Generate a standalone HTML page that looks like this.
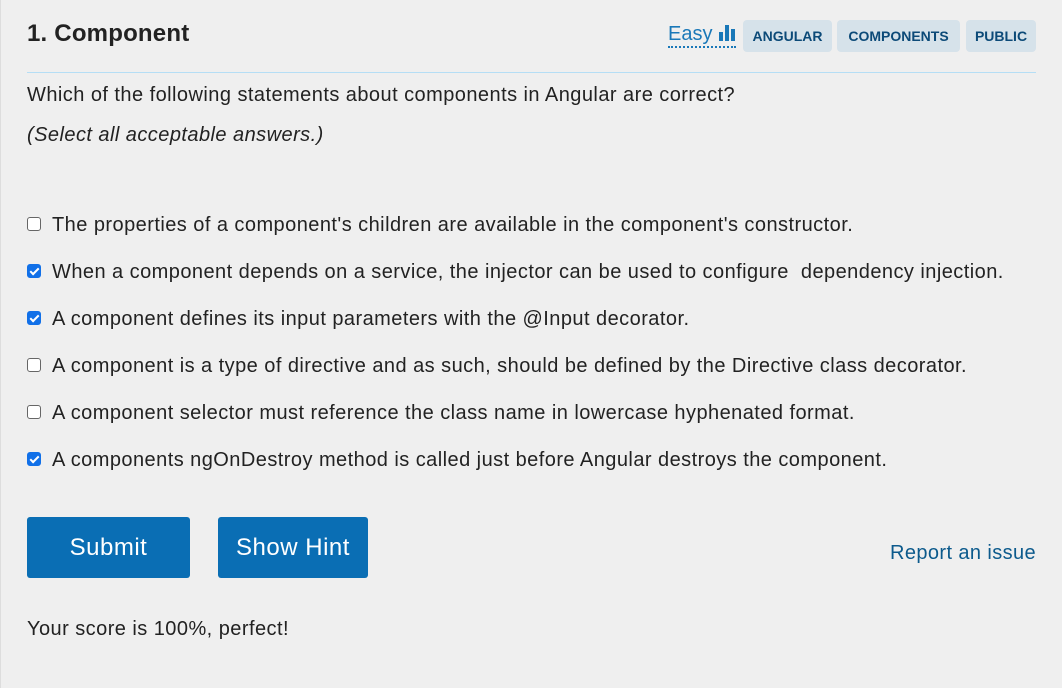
<!DOCTYPE html>
<html><head><meta charset="utf-8"><style>
html,body{margin:0;padding:0;}
body{width:1062px;height:688px;background:#efefef;font-family:"Liberation Sans",sans-serif;color:#222;position:relative;overflow:hidden;border-left:1px solid #ddd;box-sizing:border-box;}
.abs{position:absolute;white-space:nowrap;}
.t{font-size:20px;letter-spacing:0.45px;}
h1{position:absolute;left:26px;top:20px;margin:0;font-size:24px;font-weight:bold;color:#222;letter-spacing:0.2px;}
.tag{position:absolute;top:20px;height:32px;background:#d6e2ea;border-radius:4px;color:#0c4a78;font-weight:bold;font-size:14px;line-height:32px;text-align:center;}
.hr{position:absolute;left:26px;top:72px;width:1009px;height:1px;background:#b5def5;}
.opt{position:absolute;left:26px;white-space:nowrap;}
.cb{display:inline-block;width:12px;height:12px;border:1px solid #666;border-radius:3px;background:#fff;vertical-align:middle;margin-right:11px;position:relative;top:-2px;}
.cb.on{background:#1170e8;border-color:#1170e8;}
.cb.on::after{content:"";position:absolute;left:4px;top:1px;width:3px;height:7px;border:solid #fff;border-width:0 2px 2px 0;transform:rotate(45deg);}
.btn{position:absolute;top:517px;height:61px;background:#0a6eb4;color:#fff;font-size:24px;letter-spacing:0.5px;line-height:61px;text-align:center;border-radius:3px;}
</style></head><body>
<h1>1. Component</h1>
<div class="abs" style="left:667px;top:22px;font-size:20px;color:#1a78b8;border-bottom:2px dotted #1a78b8;line-height:24px;">Easy <svg width="18" height="18" viewBox="0 0 18 18" style="vertical-align:-1px"><rect x="1" y="9" width="4" height="9" fill="#1a78b8"/><rect x="7" y="2" width="4" height="16" fill="#1a78b8"/><rect x="13" y="6" width="4" height="12" fill="#1a78b8"/></svg></div>
<div class="tag" style="left:742px;width:89px;">ANGULAR</div>
<div class="tag" style="left:836px;width:123px;">COMPONENTS</div>
<div class="tag" style="left:965px;width:70px;">PUBLIC</div>
<div class="hr"></div>
<div class="abs t" style="left:26px;top:84px;">Which of the following statements about components in Angular are correct?</div>
<div class="abs t" style="left:26px;top:124px;font-style:italic;">(Select all acceptable answers.)</div>
<div class="opt t" style="top:214px"><span class="cb"></span>The properties of a component's children are available in the component's constructor.</div>
<div class="opt t" style="top:261px"><span class="cb on"></span>When a component depends on a service, the injector can be used to configure &nbsp;dependency injection.</div>
<div class="opt t" style="top:308px"><span class="cb on"></span>A component defines its input parameters with the @Input decorator.</div>
<div class="opt t" style="top:355px"><span class="cb"></span>A component is a type of directive and as such, should be defined by the Directive class decorator.</div>
<div class="opt t" style="top:402px"><span class="cb"></span>A component selector must reference the class name in lowercase hyphenated format.</div>
<div class="opt t" style="top:449px"><span class="cb on"></span>A components ngOnDestroy method is called just before Angular destroys the component.</div>
<div class="btn" style="left:26px;width:163px;">Submit</div>
<div class="btn" style="left:217px;width:150px;">Show Hint</div>
<div class="abs" style="left:889px;top:542px;font-size:20px;letter-spacing:0.4px;color:#0c5a8c;">Report an issue</div>
<div class="abs t" style="left:26px;top:618px;">Your score is 100%, perfect!</div>
</body></html>
